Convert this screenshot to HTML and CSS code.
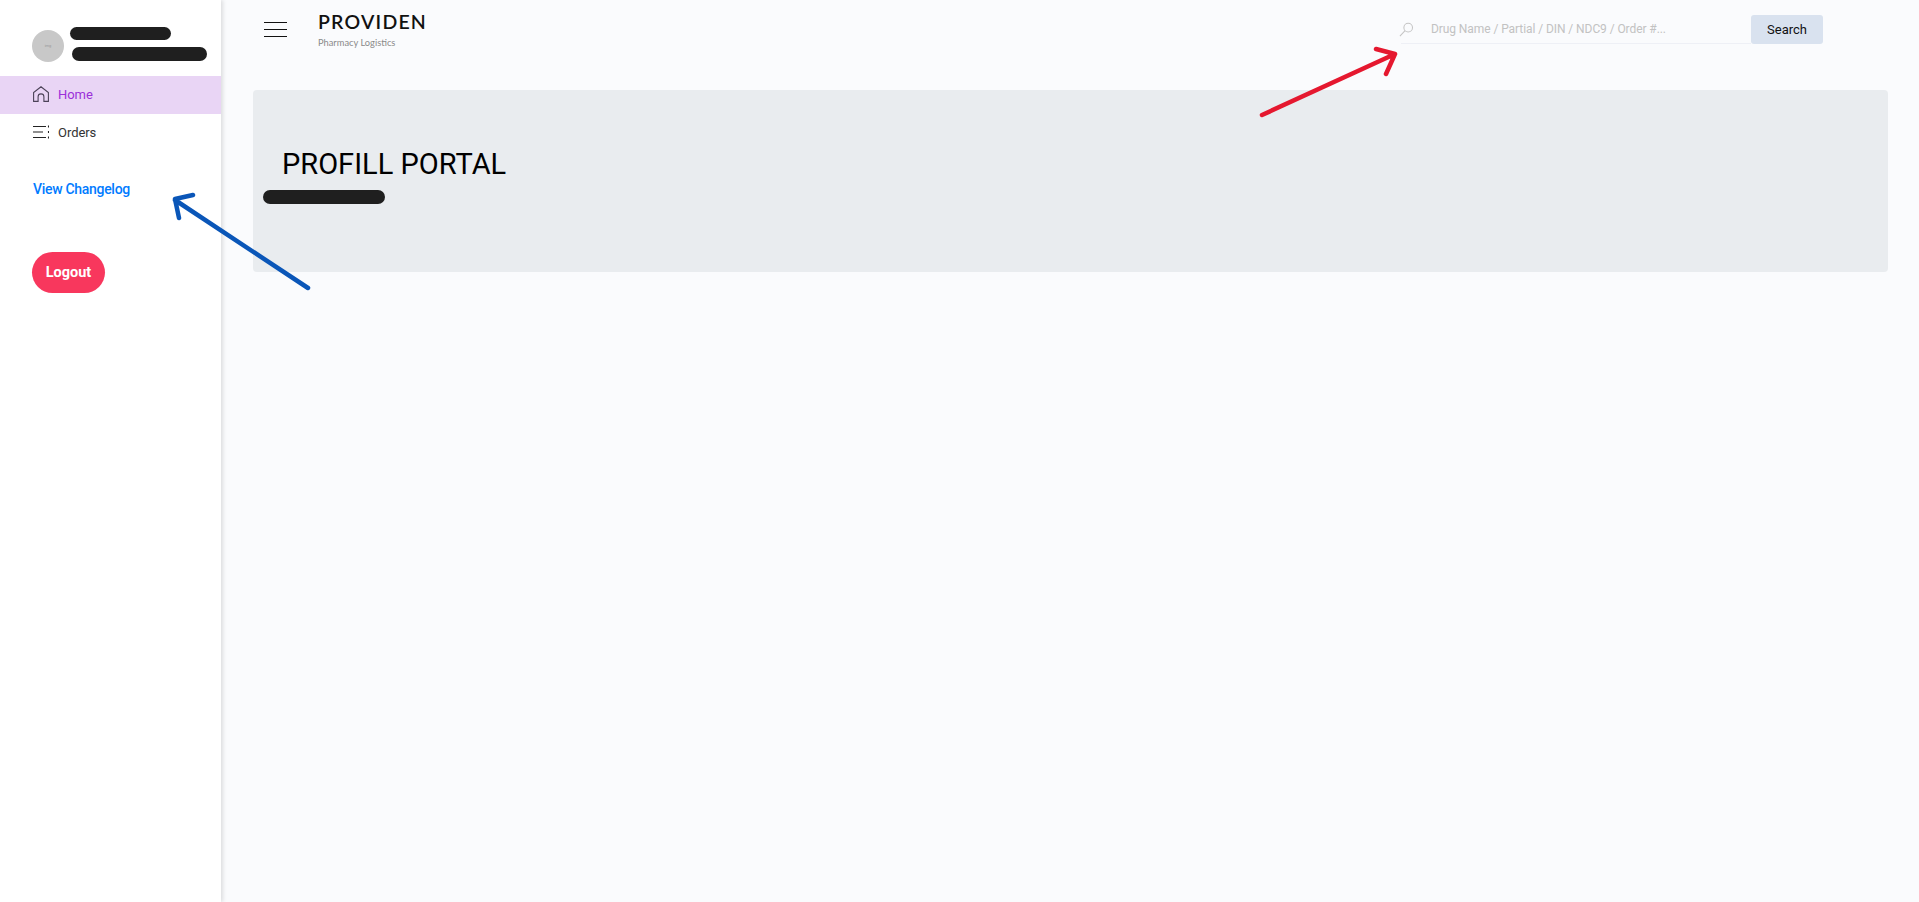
FILE: index.html
```html
<!DOCTYPE html>
<html lang="en">
<head>
  <meta charset="UTF-8">
  <meta name="viewport" content="width=device-width, initial-scale=1.0">
  <title>Profill Portal</title>
  <link rel="stylesheet" href="styles.css">
</head>
<body>
  <div class="layout">
    <aside class="sidebar">
      <div class="profile">
        <div class="avatar">img</div>
        <div class="profile-lines">
          <span class="scribble scribble-name"></span>
          <span class="scribble scribble-mail"></span>
        </div>
      </div>

      <nav class="nav">
        <a class="nav-item active" href="#">
          <svg class="nav-icon" viewBox="0 0 16 16" fill="none" stroke="#4b4257" stroke-width="1.1">
            <path d="M.6 15.4V6.6L8 .8l7.4 5.8v8.8h-4.5v-4.6a2.9 2.9 0 0 0-5.8 0v4.6z"/>
          </svg>
          Home
        </a>
        <a class="nav-item" href="#">
          <svg class="nav-icon" viewBox="0 0 16 16" fill="none" stroke="#222" stroke-width="1.1">
            <path d="M0 2.5h13M0 8h10M0 13.5h13M15.5 1.6v1.8M15.5 7.1v1.8M15.5 12.6v1.8"/>
          </svg>
          Orders
        </a>
      </nav>

      <a class="changelog" href="#">View Changelog</a>
      <button class="logout">Logout</button>
    </aside>

    <main class="main">
      <header class="topbar">
        <button class="menu-toggle"><span></span><span></span><span></span></button>
        <div class="brand">
          <div class="brand-name">PROVIDEN</div>
          <div class="brand-sub">Pharmacy Logistics</div>
        </div>
        <form class="search">
          <div class="search-field">
            <svg class="search-icon" viewBox="0 0 16 16" fill="none" stroke="#c4c4c4" stroke-width="1.1">
              <circle cx="9.8" cy="6" r="4.6"/>
              <path d="M6.5 9.3L1 15"/>
            </svg>
            <input type="text" placeholder="Drug Name / Partial / DIN / NDC9 / Order #...">
          </div>
          <button type="submit" class="search-btn">Search</button>
        </form>
      </header>

      <section class="jumbotron">
        <h1>PROFILL PORTAL</h1>
        <span class="scribble scribble-sub"></span>
      </section>
    </main>
  </div>

  <!-- annotation arrows drawn over the screenshot -->
  <svg class="arrows" viewBox="0 0 1919 902" fill="none" stroke-width="4.5" stroke-linecap="round" stroke-linejoin="round">
    <path stroke="#0a56b8" d="M308 288L175 200M193 195L175 199L179 218"/>
    <path stroke="#e5182f" d="M1262 115L1395 54M1376 49L1395 54L1386 74"/>
  </svg>
</body>
</html>
```

FILE: styles.css
```css
* {
  margin: 0;
  padding: 0;
  box-sizing: border-box;
}

body {
  font-family: 'Roboto', sans-serif;
  background: #fafbfd;
  color: #212529;
  height: 902px;
  overflow: hidden;
}

.layout {
  display: flex;
  height: 100%;
}

.sidebar {
  width: 221px;
  flex-shrink: 0;
  background: white;
  box-shadow: 2px 0 4px rgba(0, 0, 0, 0.12);
  padding-top: 26px;
}

.profile {
  display: flex;
  align-items: flex-start;
  padding-left: 32px;
  height: 50px;
}

.avatar {
  width: 32px;
  height: 32px;
  margin-top: 4px;
  border-radius: 50%;
  background: #c8c8c8;
  color: #999;
  font-size: 4px;
  line-height: 32px;
  text-align: center;
  flex-shrink: 0;
}

.profile-lines {
  display: flex;
  flex-direction: column;
  gap: 7px;
  padding-left: 6px;
  margin-top: 1px;
}

.scribble {
  display: block;
  height: 13px;
  background: #1f1f1f;
  border-radius: 7px;
}

.scribble-name {
  width: 101px;
}

.scribble-mail {
  width: 135px;
  height: 14px;
  margin-left: 2px;
}

.nav-item {
  display: flex;
  align-items: center;
  height: 38px;
  padding: 0 0 2px 33px;
  color: #333;
  font-size: 13px;
  letter-spacing: -0.05px;
  text-decoration: none;
}

.nav-item.active {
  background: #e9d5f5;
  color: #9b30d9;
}

.nav-icon {
  width: 16px;
  height: 16px;
  margin-right: 9px;
}

.changelog {
  display: block;
  margin: 27px 0 0 33px;
  color: #007bff;
  font-size: 14px;
  font-weight: 500;
  letter-spacing: -0.3px;
  line-height: 20px;
  text-decoration: none;
}

.logout {
  display: block;
  width: 73px;
  height: 41px;
  margin: 53px 0 0 32px;
  background: #f8375d;
  color: white;
  border: none;
  border-radius: 21px;
  font-family: inherit;
  font-size: 14.5px;
  font-weight: 700;
}

.main {
  flex: 1;
  padding: 0 31px 0 32px;
}

.topbar {
  display: flex;
  align-items: flex-start;
  height: 90px;
}

.menu-toggle {
  display: flex;
  flex-direction: column;
  gap: 6px;
  width: 23px;
  margin: 22px 0 0 11px;
  background: none;
  border: none;
}

.menu-toggle span {
  display: block;
  height: 1px;
  background: #111;
}

.brand {
  margin: 13px 0 0 31px;
}

.brand-name {
  font-family: 'Lato', sans-serif;
  font-size: 19.5px;
  font-weight: 600;
  letter-spacing: 1.2px;
  line-height: 18px;
  color: #111;
}

.brand-sub {
  margin-top: 6px;
  font-family: 'Lato', sans-serif;
  font-size: 9.3px;
  line-height: 11px;
  color: #8a8a8a;
}

.search {
  display: flex;
  align-items: flex-start;
  margin: 15px 65px 0 auto;
}

.search-field {
  display: flex;
  align-items: center;
  width: 350px;
  height: 29px;
  border-bottom: 1px solid #eef0f6;
}

.search-icon {
  width: 15px;
  height: 15px;
  margin-left: -2px;
  flex-shrink: 0;
}

.search-field input {
  flex: 1;
  min-width: 0;
  margin-left: 17px;
  border: none;
  background: none;
  outline: none;
  font-family: inherit;
  font-size: 12px;
  letter-spacing: -0.08px;
}

.search-field input::placeholder {
  color: #c2c2c2;
}

.search-btn {
  width: 72px;
  height: 29px;
  background: #d9e2ef;
  color: #111;
  border: none;
  border-radius: 3px;
  font-family: inherit;
  font-size: 13px;
  font-weight: 400;
}

.jumbotron {
  height: 182px;
  padding: 57px 0 0 10px;
  background: #e9ecef;
  border-radius: 4px;
}

.jumbotron h1 {
  margin-left: 19px;
  font-size: 29px;
  font-weight: 400;
  line-height: 34px;
  color: #000;
}

.scribble-sub {
  width: 122px;
  height: 14px;
  margin-top: 9px;
}

.arrows {
  position: absolute;
  top: 0;
  left: 0;
  width: 1919px;
  height: 902px;
  pointer-events: none;
}
```
